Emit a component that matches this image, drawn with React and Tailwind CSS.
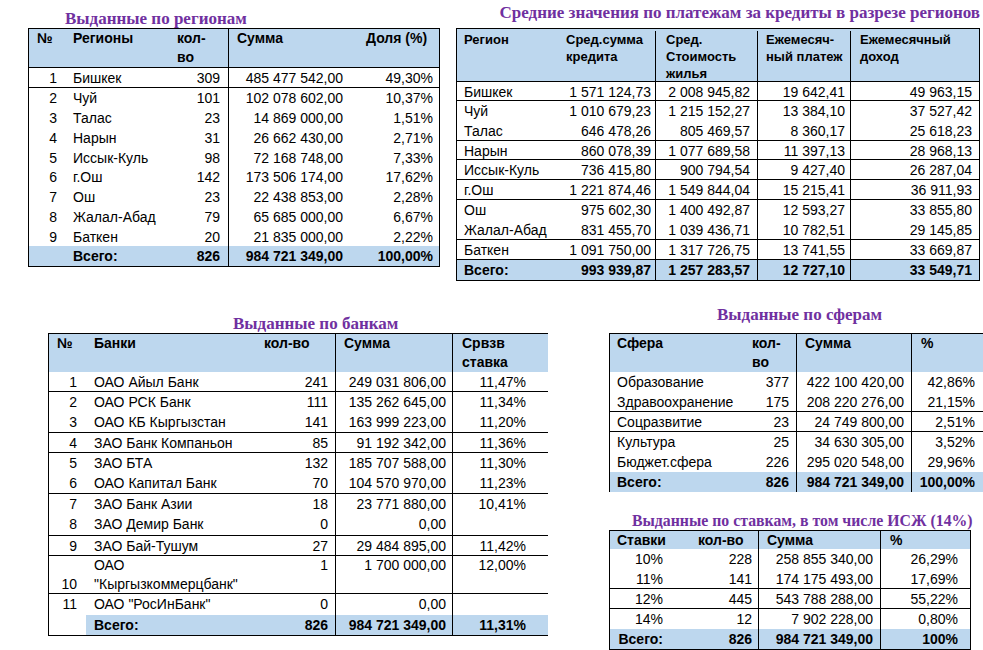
import React from "react";

const BLUE = "bg-[#bdd7ee]";

const Title = ({ className, children }) => (
  <div
    className={`font-['Liberation_Serif','Times_New_Roman',serif] font-bold leading-[20px] text-[#7030a0] whitespace-nowrap ${className}`}
  >
    {children}
  </div>
);

// one spreadsheet block: header row, body rows, total row
const Sheet = ({ className, cols, headH, headLine, head, headCls, cellCls, rows, total, totalSkipFirst }) => (
  <div className={`border-black ${className}`}>
    <div className={`grid ${cols} ${headH} ${BLUE} font-bold ${headLine ? "border-b border-black" : ""}`}>
      {head.map((h, i) => (
        <div key={i} className={headCls[i]}>
          {h}
        </div>
      ))}
    </div>
    {rows.map((r, ri) => (
      <div
        key={ri}
        className={`grid ${cols} ${r.h || "h-[20px]"} ${r.b ? "border-b border-black" : ""}`}
      >
        {r.c.map((v, i) => (
          <div
            key={i}
            className={`${cellCls[i]} ${r.tall ? "leading-[19px]" : "leading-[20px]"} ${
              r.tall && i === 0 ? "flex items-end justify-end" : ""
            }`}
          >
            {v}
          </div>
        ))}
      </div>
    ))}
    <div className={`grid ${cols} h-[20px] font-bold`}>
      {total.map((v, i) => (
        <div
          key={i}
          className={`${cellCls[i]} leading-[20px] ${totalSkipFirst && i === 0 ? "" : BLUE}`}
        >
          {v}
        </div>
      ))}
    </div>
  </div>
);

const regions = [
  { c: ["1", "Бишкек", "309", "485 477 542,00", "49,30%"], b: true },
  { c: ["2", "Чуй", "101", "102 078 602,00", "10,37%"] },
  { c: ["3", "Талас", "23", "14 869 000,00", "1,51%"] },
  { c: ["4", "Нарын", "31", "26 662 430,00", "2,71%"] },
  { c: ["5", "Иссык-Куль", "98", "72 168 748,00", "7,33%"], h: "h-[19px]" },
  { c: ["6", "г.Ош", "142", "173 506 174,00", "17,62%"] },
  { c: ["7", "Ош", "23", "22 438 853,00", "2,28%"] },
  { c: ["8", "Жалал-Абад", "79", "65 685 000,00", "6,67%"] },
  { c: ["9", "Баткен", "20", "21 835 000,00", "2,22%"], h: "h-[19px]" },
];

const averages = [
  { c: ["Бишкек", "1 571 124,73", "2 008 945,82", "19 642,41", "49 963,15"], b: true, h: "h-[19px]" },
  { c: ["Чуй", "1 010 679,23", "1 215 152,27", "13 384,10", "37 527,42"] },
  { c: ["Талас", "646 478,26", "805 469,57", "8 360,17", "25 618,23"], b: true },
  { c: ["Нарын", "860 078,39", "1 077 689,58", "11 397,13", "28 968,13"], b: true, h: "h-[19px]" },
  { c: ["Иссык-Куль", "736 415,80", "900 794,54", "9 427,40", "26 287,04"], b: true },
  { c: ["г.Ош", "1 221 874,46", "1 549 844,04", "15 215,41", "36 911,93"], b: true },
  { c: ["Ош", "975 602,30", "1 400 492,87", "12 593,27", "33 855,80"] },
  { c: ["Жалал-Абад", "831 455,70", "1 039 436,71", "10 782,51", "29 145,85"], b: true },
  { c: ["Баткен", "1 091 750,00", "1 317 726,75", "13 741,55", "33 669,87"], b: true },
];

const banks = [
  { c: ["1", "ОАО Айыл Банк", "241", "249 031 806,00", "11,47%"], b: true },
  { c: ["2", "ОАО РСК Банк", "111", "135 262 645,00", "11,34%"] },
  { c: ["3", "ОАО КБ Кыргызстан", "141", "163 999 223,00", "11,20%"], b: true, h: "h-[21px]" },
  { c: ["4", "ЗАО Банк Компаньон", "85", "91 192 342,00", "11,36%"], b: true },
  { c: ["5", "ЗАО БТА", "132", "185 707 588,00", "11,30%"] },
  { c: ["6", "ОАО Капитал Банк", "70", "104 570 970,00", "11,23%"], b: true, h: "h-[21px]" },
  { c: ["7", "ЗАО Банк Азии", "18", "23 771 880,00", "10,41%"] },
  { c: ["8", "ЗАО Демир Банк", "0", "0,00", ""], b: true, h: "h-[22px]" },
  { c: ["9", "ЗАО Бай-Тушум", "27", "29 484 895,00", "11,42%"], b: true },
  {
    c: ["10", <>ОАО<br />"Кыргызкоммерцбанк"</>, "1", "1 700 000,00", "12,00%"],
    b: true,
    h: "h-[38px]",
    tall: true,
  },
  { c: ["11", 'ОАО "РосИнБанк"', "0", "0,00", ""], h: "h-[21px]" },
];

const spheres = [
  { c: ["Образование", "377", "422 100 420,00", "42,86%"] },
  { c: ["Здравоохранение", "175", "208 220 276,00", "21,15%"], b: true },
  { c: ["Соцразвитие", "23", "24 749 800,00", "2,51%"], b: true },
  { c: ["Культура", "25", "34 630 305,00", "3,52%"] },
  { c: ["Бюджет.сфера", "226", "295 020 548,00", "29,96%"] },
];

const rates = [
  { c: ["10%", "228", "258 855 340,00", "26,29%"] },
  { c: ["11%", "141", "174 175 493,00", "17,69%"], b: true },
  { c: ["12%", "445", "543 788 288,00", "55,22%"], b: true },
  { c: ["14%", "12", "7 902 228,00", "0,80%"] },
];

export default function App() {
  return (
    <div className="w-[983px] h-[650px] overflow-hidden bg-white text-black text-[14px] font-['Liberation_Sans',Arial,sans-serif] whitespace-nowrap">
      {/* top row */}
      <div className="flex items-start h-[300px]">
        <div className="ml-[28px] w-[412px]">
          <Title className="h-[28px] pt-[9px] pl-[37px] text-[17px]">Выданные по регионам</Title>
          <Sheet
            className="border"
            cols="grid-cols-[37px_104px_59px_126px_84px]"
            headH="h-[39px] leading-[19px]"
            headLine
            head={["№", "Регионы", <>кол-<br />во</>, "Сумма", "Доля (%)"]}
            headCls={[
              "pl-[8px]",
              "pl-[7px]",
              "pl-[7px] border-r border-black",
              "pl-[8px]",
              "pl-[11px]",
            ]}
            cellCls={[
              "text-right pr-[9px]",
              "pl-[7px]",
              "text-right pr-[8px] border-r border-black",
              "text-right pr-[12px]",
              "text-right pr-[6px]",
            ]}
            rows={regions}
            total={["", "Всего:", "826", "984 721 349,00", "100,00%"]}
          />
        </div>
        <div className="ml-[16px] w-[524px]">
          <Title className="h-[28px] pt-[3px] text-right text-[17px]">
            Средние значения по платежам за кредиты в разрезе регионов
          </Title>
          <Sheet
            className="border"
            cols="grid-cols-[101px_98px_102px_93px_128px]"
            headH="h-[53px] pt-[2px] leading-[17px] text-[13px]"
            headLine
            head={[
              "Регион",
              <>Сред.сумма<br />кредита</>,
              <>Сред.<br />Стоимость<br />жилья</>,
              <>Ежемесяч-<br />ный платеж</>,
              <>Ежемесячный<br />доход</>,
            ]}
            headCls={[
              "pl-[7px]",
              "pl-[8px] border-r border-black",
              "pl-[10px] border-r border-black",
              "pl-[8px] border-r border-black",
              "pl-[9px]",
            ]}
            cellCls={[
              "pl-[7px]",
              "text-right pr-[4px] border-r border-black",
              "text-right pr-[7px] border-r border-black",
              "text-right pr-[5px] border-r border-black",
              "text-right pr-[7px]",
            ]}
            rows={averages}
            total={["Всего:", "993 939,87", "1 257 283,57", "12 727,10", "33 549,71"]}
          />
        </div>
      </div>

      {/* bottom row */}
      <div className="flex items-start">
        <div className="ml-[48px] w-[500px]">
          <Title className="h-[33px] pt-[14px] pl-[185px] text-[17px]">Выданные по банкам</Title>
          <Sheet
            className="border-l border-t border-b"
            cols="grid-cols-[37px_169px_81px_117px_95px]"
            headH="h-[38px] leading-[19px]"
            head={["№", "Банки", "кол-во", "Сумма", <>Срвзв<br />ставка</>]}
            headCls={[
              "pl-[8px]",
              "pl-[8px]",
              "pl-[9px] border-r border-black",
              "pl-[8px] border-r border-black",
              "pl-[9px]",
            ]}
            cellCls={[
              "text-right pr-[9px]",
              "pl-[8px]",
              "text-right pr-[7px] border-r border-black",
              "text-right pr-[6px] border-r border-black",
              "text-right pr-[22px]",
            ]}
            rows={banks}
            total={["", "Всего:", "826", "984 721 349,00", "11,31%"]}
            totalSkipFirst
          />
        </div>

        <div className="ml-[61px] w-[391px] shrink-0">
          <Title className="h-[33px] pt-[5px] pl-[108px] text-[17px]">Выданные по сферам</Title>
          <Sheet
            className="border-l border-t"
            cols="grid-cols-[135px_52px_115px_88px]"
            headH="h-[38px] leading-[19px]"
            head={["Сфера", <>кол-<br />во</>, "Сумма", "%"]}
            headCls={[
              "pl-[7px]",
              "pl-[7px] border-r border-black",
              "pl-[8px] border-r border-black",
              "pl-[9px]",
            ]}
            cellCls={[
              "pl-[7px]",
              "text-right pr-[7px] border-r border-black",
              "text-right pr-[7px] border-r border-black",
              "text-right pr-[25px]",
            ]}
            rows={spheres}
            total={["Всего:", "826", "984 721 349,00", "100,00%"]}
          />

          <Title className="h-[38px] pt-[19px] pl-[23px] text-[15.8px]">
            Выданные по ставкам, в том числе ИСЖ (14%)
          </Title>
          <Sheet
            className="border w-[362px]"
            cols="grid-cols-[70px_79px_122px_89px]"
            headH="h-[18px] leading-[18px]"
            head={["Ставки", "кол-во", "Сумма", "%"]}
            headCls={[
              "pl-[7px]",
              "pl-[18px] border-r border-black",
              "pl-[8px] border-r border-black",
              "pl-[9px]",
            ]}
            cellCls={[
              "text-right pr-[17px]",
              "text-right pr-[6px] border-r border-black",
              "text-right pr-[7px] border-r border-black",
              "text-right pr-[12px]",
            ]}
            rows={rates}
            total={["Всего:", "826", "984 721 349,00", "100%"]}
          />
        </div>
      </div>
    </div>
  );
}
